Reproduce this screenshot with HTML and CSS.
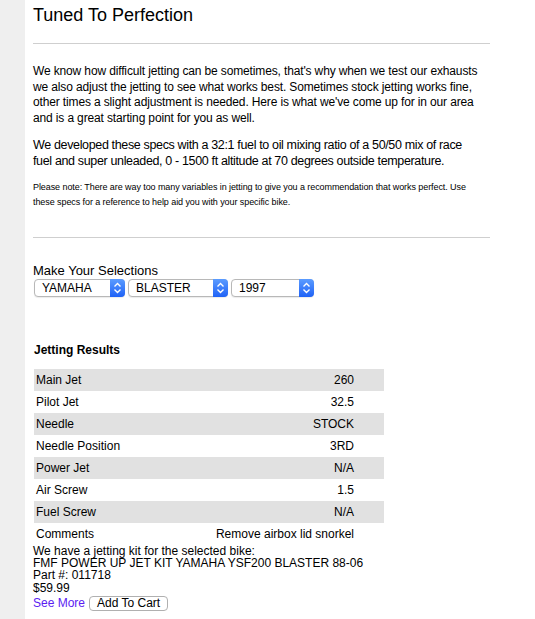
FILE: index.html
```html
<!DOCTYPE html>
<html>
<head>
<meta charset="utf-8">
<link rel="stylesheet" href="styles.css">
</head>
<body>
<div class="page">
  <div class="sidebar"></div>
  <div class="main">
    <h1 class="title">Tuned To Perfection</h1>
    <hr class="rule">
    <p class="intro">We know how difficult jetting can be sometimes, that's why when we test our exhausts we also adjust the jetting to see what works best. Sometimes stock jetting works fine, other times a slight adjustment is needed. Here is what we've come up for in our area and is a great starting point for you as well.</p>
    <p class="specs">We developed these specs with a 32:1 fuel to oil mixing ratio of a 50/50 mix of race fuel and super unleaded, 0 - 1500 ft altitude at 70 degrees outside temperature.</p>
    <p class="note">Please note: There are way too many variables in jetting to give you a recommendation that works perfect. Use these specs for a reference to help aid you with your specific bike.</p>
    <hr class="rule rule2">
    <div class="sel-label">Make Your Selections</div>
    <div class="selects">
      <div class="select s1"><span class="sel-text">YAMAHA</span><span class="sel-arrow"><svg width="9" height="12" viewBox="0 0 9 12"><path d="M1.5 4.5 L4.5 1.5 L7.5 4.5 M1.5 7.5 L4.5 10.5 L7.5 7.5" fill="none" stroke="#fff" stroke-width="1.4"/></svg></span></div>
      <div class="select s2"><span class="sel-text">BLASTER</span><span class="sel-arrow"><svg width="9" height="12" viewBox="0 0 9 12"><path d="M1.5 4.5 L4.5 1.5 L7.5 4.5 M1.5 7.5 L4.5 10.5 L7.5 7.5" fill="none" stroke="#fff" stroke-width="1.4"/></svg></span></div>
      <div class="select s3"><span class="sel-text">1997</span><span class="sel-arrow"><svg width="9" height="12" viewBox="0 0 9 12"><path d="M1.5 4.5 L4.5 1.5 L7.5 4.5 M1.5 7.5 L4.5 10.5 L7.5 7.5" fill="none" stroke="#fff" stroke-width="1.4"/></svg></span></div>
    </div>
    <div class="results-title">Jetting Results</div>
    <table class="results">
      <tr class="alt"><td>Main Jet</td><td class="val">260</td></tr>
      <tr><td>Pilot Jet</td><td class="val">32.5</td></tr>
      <tr class="alt"><td>Needle</td><td class="val">STOCK</td></tr>
      <tr><td>Needle Position</td><td class="val">3RD</td></tr>
      <tr class="alt"><td>Power Jet</td><td class="val">N/A</td></tr>
      <tr><td>Air Screw</td><td class="val">1.5</td></tr>
      <tr class="alt"><td>Fuel Screw</td><td class="val">N/A</td></tr>
      <tr><td>Comments</td><td class="val">Remove airbox lid snorkel</td></tr>
    </table>
    <div class="kit">
      <div>We have a jetting kit for the selected bike:</div>
      <div>FMF POWER UP JET KIT YAMAHA YSF200 BLASTER 88-06</div>
      <div>Part #: 011718</div>
      <div>$59.99</div>
      <div class="actions"><a class="more" href="#">See More</a><button class="cart">Add To Cart</button></div>
    </div>
  </div>
</div>
</body>
</html>
```

FILE: styles.css
```css
html, body {
  margin: 0;
  padding: 0;
  background: #fff;
  font-family: "Liberation Sans", Arial, sans-serif;
  color: #000;
}
.page {
  display: flex;
  min-height: 619px;
}
.sidebar {
  width: 25px;
  background: #efefef;
  flex: none;
}
.main {
  padding-left: 8px;
  width: 457px;
}
.title {
  font-size: 18px;
  line-height: 20px;
  font-weight: normal;
  margin: 5px 0 0;
}
.rule {
  border: 0;
  border-top: 1px solid #cfcfcf;
  height: 0;
  margin: 18px 0 0;
}
.intro, .specs, .note {
  max-width: 448px;
}
.intro {
  font-size: 12px;
  letter-spacing: -0.14px;
  line-height: 15.6px;
  margin: 20px 0 0;
}
.specs {
  font-size: 12.5px;
  letter-spacing: -0.35px;
  line-height: 15.6px;
  margin: 12px 0 0;
}
.note {
  font-size: 9px;
  letter-spacing: -0.08px;
  line-height: 15.6px;
  margin: 10px 0 0;
}
.rule2 {
  margin-top: 26px;
}
.sel-label {
  font-size: 13px;
  line-height: 15px;
  margin-top: 25px;
}
.selects {
  display: flex;
  gap: 3px;
  margin-top: 1px;
  padding-left: 1px;
}
.select {
  display: flex;
  height: 16px;
  border: 1px solid #b8b8b8;
  border-radius: 4px;
  font-size: 12px;
  line-height: 16px;
  background: #fff;
  box-shadow: 0 1px 1px rgba(0,0,0,0.08);
}
.s1 { width: 89px; }
.s2 { width: 98px; }
.s3 { width: 81px; }
.sel-text {
  flex: 1;
  padding-left: 7px;
}
.sel-arrow {
  width: 15px;
  margin: -1px -1px -1px 0;
  height: 18px;
  border-radius: 0 4px 4px 0;
  background: linear-gradient(#5b9cff, #1f62f6);
  display: flex;
  align-items: center;
  justify-content: center;
}
.results-title {
  font-size: 12px;
  font-weight: bold;
  line-height: 14px;
  margin-top: 46px;
  padding-left: 1px;
}
.results {
  border-collapse: collapse;
  width: 350px;
  margin: 12px 0 0 1px;
  font-size: 12px;
}
.results td {
  height: 22px;
  padding: 0 0 0 2px;
}
.results .val {
  text-align: right;
  padding-right: 30px;
}
.results .alt {
  background: #e1e1e1;
}
.kit {
  font-size: 12px;
  line-height: 12.3px;
}
.actions {
  display: flex;
  align-items: center;
  gap: 4px;
  margin-top: 2px;
}
.more {
  color: #5b1cf2;
  text-decoration: none;
}
.cart {
  font-family: "Liberation Sans", Arial, sans-serif;
  font-size: 12px;
  line-height: 12px;
  height: 15px;
  padding: 0 7px;
  border: 1px solid #b0b0b0;
  border-radius: 4px;
  background: #fff;
  color: #000;
}
```
